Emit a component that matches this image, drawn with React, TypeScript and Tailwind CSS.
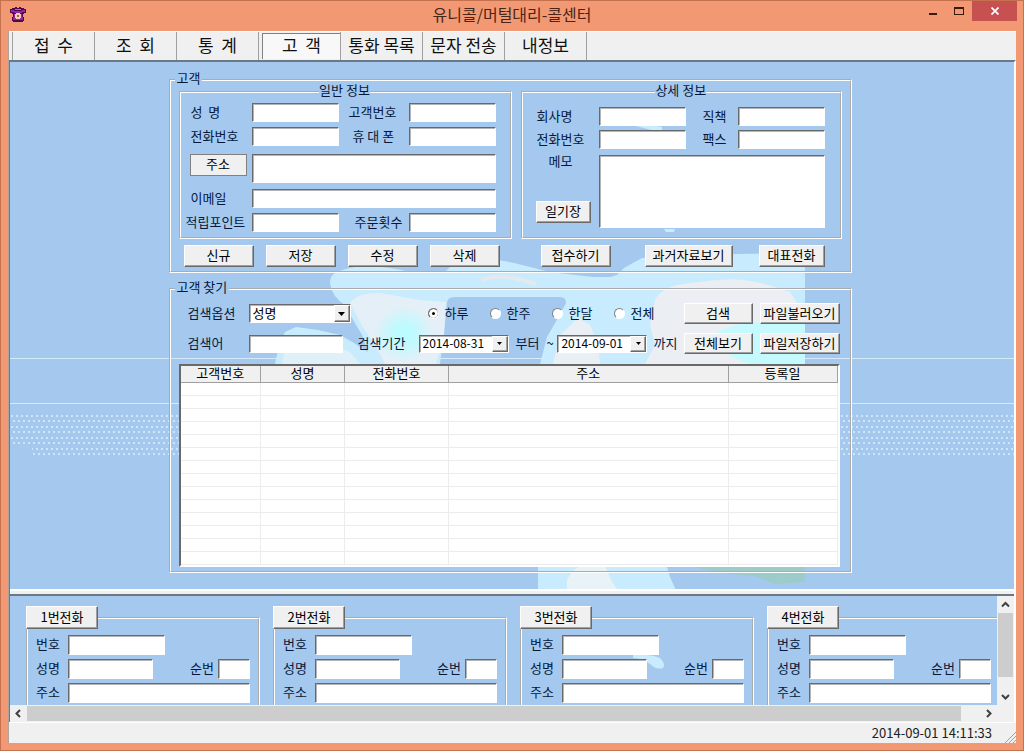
import { useState } from 'react';
import type { ReactNode } from 'react';

const tabs = ['접  수', '조  회', '통  계', '고  객', '통화 목록', '문자 전송', '내정보'];
const periods = ['하루', '한주', '한달', '전체'];
const columns = [
  { name: '고객번호', width: 'w-[80px]' },
  { name: '성명', width: 'w-[84px]' },
  { name: '전화번호', width: 'w-[104px]' },
  { name: '주소', width: '' },
  { name: '등록일', width: 'w-[109px]' },
];
const emptyRows = Array.from({ length: 14 }, (_, i) => i);
const phones = [1, 2, 3, 4];

const sunken =
  'border border-t-[#696969] border-l-[#696969] border-r-white border-b-white bg-white shadow-[inset_1px_1px_0_#b4b4b4] outline-none';
const raised =
  'border border-t-white border-l-white border-r-[#696969] border-b-[#696969] bg-[#f0f0f0] shadow-[inset_-1px_-1px_0_#a0a0a0]';
const group = 'min-w-0 border-2 border-white [border-style:groove]';
const legend = 'pb-1 leading-[8px]';

function Button({ children, className = '' }: { children: ReactNode; className?: string }) {
  return (
    <button type="button" className={`${raised} flex shrink-0 items-center justify-center pb-[2px] whitespace-nowrap text-black ${className}`}>
      {children}
    </button>
  );
}

function Field({ id, className = 'h-[19px] w-full' }: { id: string; className?: string }) {
  return <input id={id} type="text" className={`${sunken} min-w-0 px-1 ${className}`} />;
}

function Label({ id, children, className = '' }: { id: string; children: ReactNode; className?: string }) {
  return (
    <label htmlFor={id} className={`pb-[2px] whitespace-pre ${className}`}>
      {children}
    </label>
  );
}

function DownArrow() {
  return (
    <svg width="7" height="4" viewBox="0 0 7 4" aria-hidden="true">
      <path d="M0 0h7L3.500 4z" fill="#000" />
    </svg>
  );
}

function DateField({ id, value, label }: { id: string; value: string; label?: string }) {
  return (
    <div className={`${sunken} flex h-[18px] w-[90px] shrink-0`}>
      <input id={id} type="text" defaultValue={value} aria-label={label} className="w-0 flex-1 bg-transparent pb-px pl-[3px] text-[12px] text-black outline-none" />
      <button type="button" aria-label="달력" className={`${raised} flex w-4 shrink-0 items-center justify-center`}>
        <svg width="5" height="3" viewBox="0 0 5 3" aria-hidden="true">
          <path d="M0 0h5L2.500 3z" fill="#000" />
        </svg>
      </button>
    </div>
  );
}

function PhoneIcon() {
  return (
    <svg width="16" height="16" viewBox="0 0 16 16" shapeRendering="crispEdges" aria-hidden="true">
      <path d="M5 0h2v1h2V0h2v1h3v1h2v4h-2v1h-1v3h1v4h-1v1H3v-1H2v-4h1V7H2V6H0V2h2V1h3z" fill="#4a0c4a" />
      <path d="M1 3h3v2H1zM12 3h3v2h-3zM4 4h8v2H4zM4 7h8v3h1v3H3v-3h1z" fill="#a320a8" />
      <path d="M5 2h6v1H5z" fill="#c060b0" />
      <path d="M6 6h4v1h1v4h-1v1H6v-1H5V7h1z" fill="#f0cdb4" />
      <path d="M7 8h2v2H7z" fill="#a8604e" />
    </svg>
  );
}

function TitleBar() {
  return (
    <header className="grid h-[30px] grid-cols-[1fr_auto_1fr] items-start">
      <div className="pt-[6px] pl-[9px]">
        <PhoneIcon />
      </div>
      <h1 className="text-[16px] leading-[26px] text-[#4a2416]">유니콜/머털대리-콜센터</h1>
      <div className="flex justify-end pr-[6px]">
        <button type="button" aria-label="최소화" className="flex h-5 w-[26px] items-center justify-center">
          <svg width="10" height="12" viewBox="0 0 10 12" shapeRendering="crispEdges" aria-hidden="true">
            <path d="M1 8h8v2H1z" fill="#3a1a0c" />
          </svg>
        </button>
        <button type="button" aria-label="최대화" className="flex h-5 w-[26px] items-center justify-center">
          <svg width="10" height="8" viewBox="0 0 10 8" shapeRendering="crispEdges" aria-hidden="true">
            <path d="M0 0h10v8H0zM1 2v5h8V2z" fill="#3a1a0c" fillRule="evenodd" />
          </svg>
        </button>
        <button type="button" aria-label="닫기" className="flex h-5 w-[45px] items-center justify-center bg-[#c75050]">
          <svg width="8" height="8" viewBox="0 0 8 8" aria-hidden="true">
            <path d="M0.500 0.500l7 7M7.500 0.500l-7 7" stroke="#fff" strokeWidth="1.700" />
          </svg>
        </button>
      </div>
    </header>
  );
}

function Toolbar() {
  const [active, setActive] = useState(3);

  return (
    <nav className="flex h-[29px] border-t border-white bg-[#f0f0f0] pl-[3px] text-[17px] text-[#101010]">
      <div className="flex border-l border-[#a0a0a0]">
        {tabs.map((tab, i) => (
          <div key={tab} className={`w-[82px] border-r border-[#a0a0a0] py-px ${i === active ? 'pl-[3px]' : ''}`}>
            <button
              type="button"
              onClick={() => setActive(i)}
              className={`h-full w-full pb-[3px] leading-[22px] whitespace-pre ${i === active ? 'border-t border-l border-[#808080] bg-[#f8f8f8]' : ''}`}
            >
              {tab}
            </button>
          </div>
        ))}
      </div>
    </nav>
  );
}

// world map wallpaper behind the customer form
function MapBackground() {
  return (
    <svg className="pointer-events-none absolute inset-0 h-full w-full" aria-hidden="true">
      <defs>
        <pattern id="dots" width="5" height="11" patternUnits="userSpaceOnUse">
          <rect x="1" y="1" width="2" height="2" fill="#cde6fb" />
          <rect x="3" y="6" width="2" height="2" fill="#cde6fb" />
        </pattern>
        <radialGradient id="cyan">
          <stop offset="0.300" stopColor="#bcfbff" />
          <stop offset="1" stopColor="#bcfbff" stopOpacity="0" />
        </radialGradient>
      </defs>
      <rect y="296" width="100%" height="1" fill="#d5ebfc" />
      <rect y="341" width="100%" height="1" fill="#d5ebfc" />
      <rect y="349" width="100%" height="33" fill="url(#dots)" />
      <rect x="22" y="382" width="100%" height="11" fill="url(#dots)" />
      <svg x="50%" overflow="visible">
        <g transform="translate(-512 -62)">
          <path
            d="M330 283Q330 276 335 273Q350 266 368 266Q390 267 410 272H445L452 265Q468 259 484 259Q505 260 522 265L550 272L593 277H610L617 275L624 268L642 258L691 255L796 253Q805 256 805 262V364H540L547 337L558 318L566 303Q566 297 560 297H455Q447 297 447 303L445 323L440 364H275L278 350L285 332L296 327L318 330L340 335L354 343L368 352L362 335L352 318L345 305Q332 297 330 283Z"
            fill="#c8ecfd"
          />
          <path d="M350 303Q358 292 380 293L420 300L446 302L444 335L436 364H385L375 345L362 326Z" fill="#e4eff7" />
          <ellipse cx="404" cy="334" rx="30" ry="28" fill="url(#cyan)" />
          <path d="M481 280Q500 272 536 284" stroke="#e3e9ee" strokeWidth="4" fill="none" />
          <path d="M285 348Q310 336 350 352L360 364H282Z" fill="#dff0f8" />
          <path d="M655 300Q662 284 700 282Q735 276 765 284L790 292L803 312V364H645L655 345L650 325Z" fill="#ebeff3" />
          <path d="M713 335Q735 318 805 322V364H750Q720 355 713 335Z" fill="#c4fafe" />
          <path d="M553 364L560 335L578 318L590 325L598 345L600 364Z" fill="#e9eff5" />
          <path d="M632 125Q640 122 662 127Q663 133 655 131Z" fill="#c8ecfd" />
          <path d="M664 229L675 229L674 232L666 232Z" fill="#c8ecfd" />
          <path d="M538 564H666L670 577L676 590H538Z" fill="#c8ecfd" />
          <path d="M567 580Q571 571 580 566H605L612 582L618 590H567Z" fill="#e8f2f7" />
          <path d="M690 566H805V582L775 584L755 576L720 573Z" fill="#9ccbc9" />
        </g>
      </svg>
    </svg>
  );
}

function GeneralInfo() {
  return (
    <fieldset className={`${group} pt-[5px] pr-[14px] pb-[5px]`}>
      <legend className={`${legend} ml-[44%]`}>일반 정보</legend>
      <div className="grid grid-cols-[71px_1fr_70px_1fr] items-center gap-y-[5px]">
        <Label id="name" className="pl-[10px]">성  명</Label>
        <Field id="name" />
        <Label id="customerNo" className="pl-[10px]">고객번호</Label>
        <Field id="customerNo" />
        <Label id="tel" className="pl-[10px]">전화번호</Label>
        <Field id="tel" />
        <Label id="mobile" className="pl-[14px]">휴 대 폰</Label>
        <Field id="mobile" />
      </div>
      <div className="mt-2 grid grid-cols-[71px_1fr] items-start">
        <button type="button" className="ml-[9px] h-[22px] w-[57px] border border-[#808080] bg-[#f0f0f0] pb-[3px] text-black">
          주소
        </button>
        <textarea aria-label="주소" className={`${sunken} h-[29px] w-full resize-none px-1`} />
      </div>
      <div className="mt-[6px] grid grid-cols-[71px_1fr_70px_1fr] items-center gap-y-[5px]">
        <Label id="email" className="pl-[10px]">이메일</Label>
        <Field id="email" className="col-span-3 h-[19px] w-full" />
        <Label id="point" className="pl-[5px]">적립포인트</Label>
        <Field id="point" />
        <Label id="orders" className="pl-[16px]">주문횟수</Label>
        <Field id="orders" />
      </div>
    </fieldset>
  );
}

function DetailInfo() {
  return (
    <fieldset className={`${group} pt-[9px] pr-[15px] pb-[9px]`}>
      <legend className={`${legend} ml-[44%]`}>상세 정보</legend>
      <div className="grid grid-cols-[76px_1fr_52px_1fr] items-center gap-y-1">
        <Label id="company" className="pl-[14px]">회사명</Label>
        <Field id="company" />
        <Label id="position" className="pl-[17px]">직책</Label>
        <Field id="position" />
        <Label id="companyTel" className="pl-[14px]">전화번호</Label>
        <Field id="companyTel" />
        <Label id="fax" className="pl-[17px]">팩스</Label>
        <Field id="fax" />
      </div>
      <div className="mt-[6px] grid grid-cols-[76px_1fr]">
        <div className="flex flex-col justify-between pb-[5px]">
          <Label id="memo" className="pl-[26px] leading-[12px]">메모</Label>
          <Button className="ml-[13px] h-[22px] w-[55px]">일기장</Button>
        </div>
        <textarea id="memo" className={`${sunken} h-[73px] w-full resize-none px-1`} />
      </div>
    </fieldset>
  );
}

function CustomerForm() {
  return (
    <fieldset className={`${group} px-2 pb-1`}>
      <legend className={`${legend} ml-[-4px] px-[2px]`}>고객</legend>
      <div className="grid grid-cols-[333fr_321fr] gap-x-[9px] gap-y-[6px]">
        <GeneralInfo />
        <DetailInfo />
        <div className="flex gap-3 pl-[5px]">
          <Button className="h-[22px] w-[70px]">신규</Button>
          <Button className="h-[22px] w-[70px]">저장</Button>
          <Button className="h-[22px] w-[70px]">수정</Button>
          <Button className="h-[22px] w-[70px]">삭제</Button>
        </div>
        <div className="flex pl-5">
          <Button className="h-[22px] w-[70px]">접수하기</Button>
          <Button className="ml-[34px] h-[22px] w-[88px]">과거자료보기</Button>
          <Button className="ml-[26px] h-[22px] w-[66px]">대표전화</Button>
        </div>
      </div>
    </fieldset>
  );
}

function CustomerTable() {
  return (
    <div className="mt-[10px] border-2 border-t-[#696969] border-l-[#696969] border-r-white border-b-white bg-white">
      <table className="w-full table-fixed border-collapse text-black">
        <thead>
          <tr className="h-4 bg-[#f0f0f0]">
            {columns.map((c) => (
              <th key={c.name} className={`${c.width} h-4 border-r border-b border-[#a0a0a0] p-0 pb-[2px] text-center leading-[12px] font-normal`}>
                {c.name}
              </th>
            ))}
          </tr>
        </thead>
        <tbody>
          {emptyRows.map((row) => (
            <tr key={row} className="h-[13px]">
              {columns.map((c) => (
                <td key={c.name} className="h-[13px] border-r border-b border-[#ececec] p-0" />
              ))}
            </tr>
          ))}
        </tbody>
      </table>
    </div>
  );
}

function CustomerSearch() {
  const [period, setPeriod] = useState('하루');

  return (
    <fieldset className={`${group} mt-[10px] pt-2 pr-[10px] pb-1 pl-2`}>
      <legend className={`${legend} ml-[-4px] px-[2px]`}>고객 찾기</legend>
      <div className="flex h-[21px] items-center">
        <Label id="option" className="w-[70px] pl-[9px]">검색옵션</Label>
        <div className={`${sunken} relative h-[19px] w-[102px] shrink-0`}>
          <select id="option" className="h-full w-full appearance-none bg-transparent pb-[2px] pl-[3px] leading-[15px] text-black outline-none">
            <option>성명</option>
            <option>전화번호</option>
            <option>주소</option>
          </select>
          <span className={`${raised} pointer-events-none absolute inset-y-0 right-0 flex w-4 items-center justify-center`}>
            <DownArrow />
          </span>
        </div>
        <div className="ml-[77px] flex">
          {periods.map((p) => (
            <label key={p} className="flex w-[62px] items-center gap-[6px]">
              <input
                type="radio"
                name="period"
                checked={period === p}
                onChange={() => setPeriod(p)}
                className="h-[11px] w-[11px] appearance-none rounded-full border border-t-[#808080] border-l-[#808080] border-r-white border-b-white bg-white checked:bg-black checked:shadow-[inset_0_0_0_3px_#fff]"
              />
              <span className="pb-[2px]">{p}</span>
            </label>
          ))}
        </div>
        <div className="ml-auto flex gap-[7px]">
          <Button className="h-[21px] w-[69px]">검색</Button>
          <Button className="h-[21px] w-[80px]">파일불러오기</Button>
        </div>
      </div>
      <div className="mt-[9px] flex h-[21px] items-center">
        <Label id="keyword" className="w-[70px] pl-[9px]">검색어</Label>
        <Field id="keyword" className="h-[18px] w-[94px]" />
        <Label id="from" className="w-[76px] pl-[15px]">검색기간</Label>
        <DateField id="from" value="2014-08-31" />
        <span className="pb-[2px] pl-[7px]">부터</span>
        <span className="w-[18px] pb-[2px] pl-[7px]">~</span>
        <DateField id="to" value="2014-09-01" label="검색 종료일" />
        <span className="pb-[2px] pl-[6px]">까지</span>
        <div className="ml-auto flex gap-[7px]">
          <Button className="h-[21px] w-[69px]">전체보기</Button>
          <Button className="h-[21px] w-[80px]">파일저장하기</Button>
        </div>
      </div>
      <CustomerTable />
    </fieldset>
  );
}

function PhoneGroup({ no }: { no: number }) {
  return (
    <fieldset className={`${group} w-[234px] shrink-0 border-b-0 pt-[6px] pr-2 pb-[2px] pl-2`}>
      <legend className="ml-[-10px] p-0">
        <Button className="h-[23px] w-[72px]">{no}번전화</Button>
      </legend>
      <div className="flex flex-col gap-1">
        <div className="flex h-5 items-center">
          <Label id={`number${no}`} className="w-8">번호</Label>
          <Field id={`number${no}`} className="h-5 w-[97px]" />
        </div>
        <div className="flex h-5 items-center">
          <Label id={`name${no}`} className="w-8">성명</Label>
          <Field id={`name${no}`} className="h-5 w-[85px]" />
          <Label id={`order${no}`} className="ml-auto w-7">순번</Label>
          <Field id={`order${no}`} className="h-5 w-8" />
        </div>
        <div className="flex h-5 items-center">
          <Label id={`address${no}`} className="w-8">주소</Label>
          <Field id={`address${no}`} className="h-5 flex-1" />
        </div>
      </div>
    </fieldset>
  );
}

function ScrollArrow({ d, label }: { d: string; label: string }) {
  return (
    <button type="button" aria-label={label} className="flex h-[17px] w-[17px] shrink-0 items-center justify-center">
      <svg width="9" height="9" viewBox="0 0 9 9" fill="none" stroke="#404040" strokeWidth="2" aria-hidden="true">
        <path d={d} />
      </svg>
    </button>
  );
}

function PhonePanel() {
  return (
    <section>
      <div className="flex">
        <div className="relative min-w-0 flex-1 overflow-hidden bg-[#a5c9ee] pt-[10px] pl-4">
          <svg className="pointer-events-none absolute inset-0 h-full w-full" aria-hidden="true">
            <path d="M623 59Q640 58 650 62Q656 68 653 72Q646 74 640 68Q632 62 623 62Z" fill="#c8ecfd" />
          </svg>
          <div className="relative flex gap-[13px]">
            {phones.map((no) => (
              <PhoneGroup key={no} no={no} />
            ))}
          </div>
        </div>
        <div className="flex w-[17px] flex-col bg-[#f0f0f0]">
          <ScrollArrow label="위로" d="M1 6.500L4.500 3L8 6.500" />
          <div className="flex flex-1 flex-col px-px">
            <div className="h-16 bg-[#cdcdcd]" />
          </div>
          <ScrollArrow label="아래로" d="M1 3L4.500 6.500L8 3" />
        </div>
      </div>
      <div className="flex h-[17px] bg-[#f0f0f0]">
        <ScrollArrow label="왼쪽" d="M6 1L2.500 4.500L6 8" />
        <div className="flex-1 py-px">
          <div className="h-full w-[98%] bg-[#cdcdcd]" />
        </div>
        <ScrollArrow label="오른쪽" d="M3 1L6.500 4.500L3 8" />
        <div className="w-[17px]" />
      </div>
    </section>
  );
}

function StatusBar() {
  return (
    <footer className="flex h-[21px] items-center justify-end border-t border-white bg-[#f0f0f0] text-[13px] text-[#202020]">
      <time>2014-09-01 14:11:33</time>
      <svg className="ml-3 self-end" width="12" height="12" viewBox="0 0 12 12" stroke="#a0a0a0" aria-hidden="true">
        <path d="M1 12L12 1M5 12L12 5M9 12L12 9" />
      </svg>
    </footer>
  );
}

export default function App() {
  return (
    <div className="flex min-h-screen flex-col border border-[#c4714f] bg-[#f29973] font-['Noto_Sans_CJK_KR','Noto_Sans',sans-serif] text-[13px] leading-[16px] text-[#04183c]">
      <TitleBar />
      <div className="mr-[7px] mb-[7px] ml-[7px] flex flex-1 flex-col border-l border-[#b0a49e] bg-[#f0f0f0]">
        <Toolbar />
        <div className="flex flex-1 flex-col border-t-2 border-r-2 border-l border-t-[#6c7884] border-r-white border-l-[#6c7884]">
          <main className="relative flex flex-1 flex-col items-center bg-[#a5c9ee] pt-3 pr-5 pb-4 pl-4">
            <MapBackground />
            <div className="relative w-full max-w-[683px]">
              <CustomerForm />
              <CustomerSearch />
            </div>
          </main>
          <div className="h-[7px] border-t-2 border-b-2 border-t-white border-b-[#6c7884] bg-[#f0f0f0]" />
          <PhonePanel />
        </div>
        <StatusBar />
      </div>
    </div>
  );
}
